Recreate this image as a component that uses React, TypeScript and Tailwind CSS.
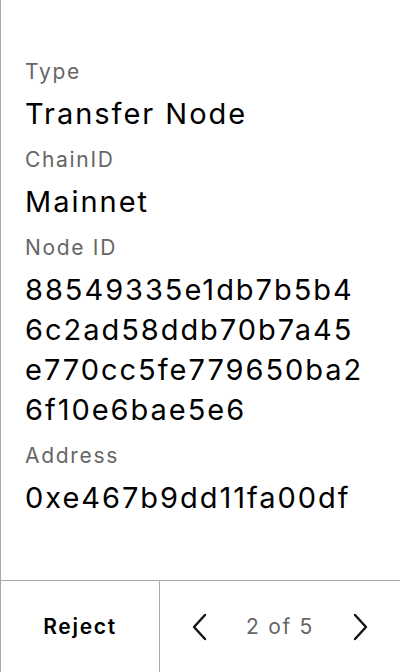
import React from 'react';

const fields = [
  { label: 'Type', lines: ['Transfer Node'] },
  { label: 'ChainID', lines: ['Mainnet'] },
  { label: 'Node ID', lines: ['88549335e1db7b5b4', '6c2ad58ddb70b7a45', 'e770cc5fe779650ba2', '6f10e6bae5e6'] },
  { label: 'Address', lines: ['0xe467b9dd11fa00df'] },
];

const Chevron: React.FC<{ dir: 'left' | 'right' }> = ({ dir }) => (
  <svg width="16" height="28" viewBox="0 0 16 28" fill="none" stroke="#111" strokeWidth="2.4" strokeLinecap="round" strokeLinejoin="round">
    {dir === 'left' ? <path d="M14 2 L3 14 L14 26" /> : <path d="M2 2 L13 14 L2 26" />}
  </svg>
);

export default function App() {
  return (
    <div
      className="flex h-[672px] w-[400px] flex-col border-l border-[#a8a8a8] bg-white text-black"
      style={{ fontFamily: 'Inter, "Noto Sans", sans-serif' }}
    >
      {/* Details */}
      <div className="flex flex-1 flex-col gap-3 px-6 pt-[58px]">
        {fields.map((f) => (
          <div key={f.label} className="flex flex-col gap-2">
            <span className="text-[21px] leading-[28px] tracking-[0.08em] text-[#666666]">{f.label}</span>
            <div className="flex flex-col text-[29px] leading-[40px] tracking-[0.068em]">
              {f.lines.map((l) => (
                <span key={l} className="whitespace-nowrap">{l}</span>
              ))}
            </div>
          </div>
        ))}
      </div>

      {/* Footer */}
      <div className="flex h-[92px] border-t border-[#a8a8a8]">
        <button className="flex w-[159px] items-center justify-center border-r border-[#a8a8a8] text-[21px] font-semibold tracking-[0.08em]">
          Reject
        </button>
        <div className="flex flex-1 items-center justify-between px-[31px]">
          <Chevron dir="left" />
          <span className="text-[21px] tracking-[0.08em] text-[#666666]">2 of 5</span>
          <Chevron dir="right" />
        </div>
      </div>
    </div>
  );
}
